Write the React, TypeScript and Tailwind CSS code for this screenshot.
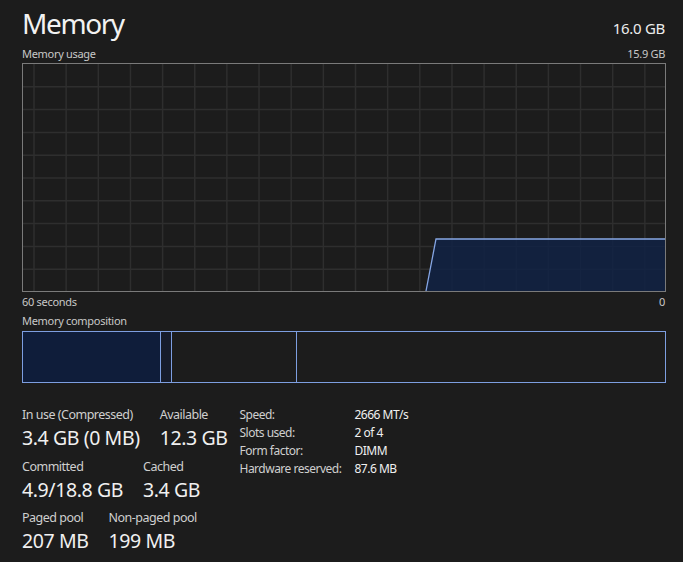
import React from "react";

const W = 642;
const H = 227;

function Chart() {
  const vlines: number[] = [];
  for (let x = 11; x < W; x += 32.15) vlines.push(x);
  const hlines: number[] = [];
  for (let i = 1; i < 10; i++) hlines.push(i * 22.8);
  return (
    <div className="w-[644px] h-[229px] border border-[#7a7a7a] bg-[#1c1c1c]">
      <svg width={W} height={H} viewBox={`0 0 ${W} ${H}`} className="block">
        {vlines.map((x, i) => (
          <line key={"v" + i} x1={x} y1={0} x2={x} y2={H} stroke="#2e2e2e" strokeWidth={1.5} />
        ))}
        {hlines.map((y, i) => (
          <line key={"h" + i} x1={0} y1={y} x2={W} y2={y} stroke="#2e2e2e" strokeWidth={1.5} />
        ))}
        <polygon points={`403,${H} 413,175 ${W},175 ${W},${H}`} fill="#112244" fillOpacity={0.85} />
        <polyline points={`403,${H} 413,175 ${W},175`} fill="none" stroke="#86a6e4" strokeWidth={1.3} />
      </svg>
    </div>
  );
}

function Stat({ label, value }: { label: string; value: string }) {
  return (
    <div className="flex flex-col">
      <div className="text-[12.5px] leading-[16px] tracking-[-0.5px] text-[#cfcfcf]">{label}</div>
      <div className="mt-[2px] text-[19.5px] leading-[26px] tracking-[-0.4px] text-[#f0f0f0]">{value}</div>
    </div>
  );
}

export default function App() {
  return (
    <div
      className="w-[683px] h-[562px] bg-[#1c1c1c] text-white overflow-hidden pl-[22px] pr-[18px] pt-[3px]"
      style={{ fontFamily: '"Noto Sans", "Open Sans", sans-serif' }}
    >
      <div className="flex items-baseline justify-between h-[40px] pt-[1px]">
        <div className="text-[28px] leading-[38px] tracking-[-1.4px] text-[#f2f2f2]">Memory</div>
        <div className="text-[15px] tracking-[-0.3px] text-[#ececec]">16.0 GB</div>
      </div>
      <div className="flex items-end justify-between h-[20px] text-[11px] leading-[14px] tracking-[-0.3px] text-[#c8c8c8] pb-[2px]">
        <span>Memory usage</span>
        <span>15.9 GB</span>
      </div>
      <Chart />
      <div className="flex justify-between h-[19px] pt-[1px] text-[11px] leading-[18px] tracking-[-0.3px] text-[#c8c8c8]">
        <span>60 seconds</span>
        <span>0</span>
      </div>
      <div className="h-[20px] text-[11px] leading-[20px] tracking-[-0.3px] text-[#c8c8c8]">Memory composition</div>
      <div className="flex w-[644px] h-[52px] border border-[#7d9ee0]">
        <div className="w-[138px] h-full bg-[#0f1d3a] border-r border-[#7d9ee0]" />
        <div className="w-[11px] h-full bg-[#161b2a] border-r border-[#7d9ee0]" />
        <div className="w-[125px] h-full border-r border-[#7d9ee0]" />
        <div className="flex-1 h-full" />
      </div>
      <div className="flex items-start mt-[24px]">
        <div className="flex flex-col gap-[7.5px]">
          <div className="flex gap-[20px]">
            <Stat label="In use (Compressed)" value="3.4 GB (0 MB)" />
            <Stat label="Available" value="12.3 GB" />
          </div>
          <div className="flex gap-[20px]">
            <Stat label="Committed" value="4.9/18.8 GB" />
            <Stat label="Cached" value="3.4 GB" />
          </div>
          <div className="flex gap-[20px]">
            <Stat label="Paged pool" value="207 MB" />
            <Stat label="Non-paged pool" value="199 MB" />
          </div>
        </div>
        <div className="ml-[12px] grid grid-cols-[115px_auto] items-start text-[12px] leading-[18px] tracking-[-0.5px] mt-[-1px]">
          <span className="text-[#cfcfcf]">Speed:</span>
          <span className="text-[#f0f0f0]">2666 MT/s</span>
          <span className="text-[#cfcfcf]">Slots used:</span>
          <span className="text-[#f0f0f0]">2 of 4</span>
          <span className="text-[#cfcfcf]">Form factor:</span>
          <span className="text-[#f0f0f0]">DIMM</span>
          <span className="text-[#cfcfcf]">Hardware reserved:</span>
          <span className="text-[#f0f0f0]">87.6 MB</span>
        </div>
      </div>
    </div>
  );
}
